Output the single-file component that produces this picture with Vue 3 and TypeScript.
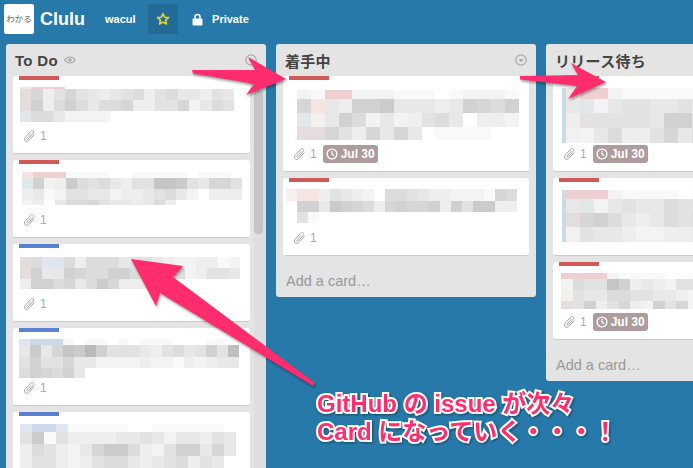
<script setup lang="ts">
// blurred card text: every row is "height:cells", a cell is a hex grey step or a tint letter
interface Blur { x: number; top: number; w: number; rows: string[]; side?: boolean }
interface Card { h: number; label: 'red' | 'blue'; blur: Blur; clip?: boolean; date?: boolean }
interface List { title: string; eye?: boolean; menu?: boolean; scroll?: boolean; add?: boolean; cards: Card[] }

const tints: Record<string, string> = {
  r: '#efd0d2', p: '#f6e4e3', l: '#cdd9ea', m: '#e0e6f0', n: '#e2e8ea', o: '#f3f0ee', k: '#e5dcdc',
}

function cellColor(c: string) {
  if (tints[c]) return tints[c]
  const d = parseInt(c, 16)
  const v = Math.round(168 + d * 5.8)
  return `rgb(${v},${v},${v})`
}

const lists: List[] = [
  {
    title: 'To Do', eye: true, menu: true, scroll: true,
    cards: [
      { h: 78, label: 'red', clip: true, blur: { x: 7, top: 7, w: 11.27, rows: ['2:prrrf', '11:k8ca8abcba9ca9bbcab', '11:k7c979b998ccaa8db9a', '11:n99bddddff'] } },
      { h: 78, label: 'red', clip: true, blur: { x: 9, top: 8, w: 11, rows: ['6:prrreeeeffeeeeefeeef', '11:n7dc69a9bcaa556ab88a', '11:cbedaabbdccba9bdfccc', '5:dcfb998abbcb9cffff'] } },
      { h: 78, label: 'blue', clip: true, blur: { x: 7, top: 9, w: 11, rows: ['11:k9mm9c999baabcddcced', '11:k7bb7899779aad9dcaab', '10:c7798b968cccc'] } },
      { h: 78, label: 'blue', clip: true, blur: { x: 6, top: 7, w: 11, rows: ['6:mlllefeefefeeefffeef', '12:b6b85637aaabca9ba7a4', '11:a7aa8bbddddcddecdcbb', '10:97897b'] } },
      { h: 78, label: 'blue', blur: { x: 7, top: 8, w: 12, rows: ['8:mllmeeeeeffeeeeeef', '12:a6eaccccbbabdbbcab', '12:c9acdb8669cda77b8b', '12:caacdca99bcba9cabf'] } },
    ],
  },
  {
    title: '着手中', menu: true, add: true,
    cards: [
      { h: 96, label: 'red', clip: true, date: true, blur: { x: 14, top: 10, w: 13.85, rows: ['9:derrdddeeefeddde', '14:8pbc776bbbcb7897', '14:nob79dbdca9bfccd', '13:kk8ac8b8bfeeeeff'] } },
      { h: 78, label: 'red', clip: true, blur: { x: 3, top: 7, w: 11, rows: ['12:oppcabcdf99abccddde89', '11:f77b6789c87887c7a66cc', '11:fae'] } },
    ],
  },
  {
    title: 'リリース待ち', add: true,
    cards: [
      { h: 96, label: 'red', clip: true, date: true, blur: { x: 13, top: 8, w: 14, side: true, rows: ['11:prrdeeeeeeee', '14:bndbaabbacba', '15:caaaaab77a99', '15:odb9cca8b9ab'] } },
      { h: 78, label: 'red', blur: { x: 13, top: 8, w: 14, side: true, rows: ['9:rrrdeeeefeee', '14:bndbabb9aa99', '14:k879bcb9a999', '15:oabbcddccbbb'] } },
      { h: 78, label: 'red', clip: true, date: true, blur: { x: 8, top: 7, w: 11.500, rows: ['6:rrrrdeeeeffe', '11:d9aa57cbcdaa', '11:oabb99aabbcd', '8:ka7ca8cd7a8d'] } },
    ],
  },
]
</script>

<template>
  <div class="page">
    <header class="bar">
      <div class="logo">わかる</div>
      <span class="name">Clulu</span>
      <span class="org">wacul</span>
      <div class="star">
        <svg width="14" height="14" viewBox="0 0 14 14">
          <path d="M7 1.6l1.6 3.6 3.9.4-2.9 2.6.8 3.8L7 10.1 3.6 12l.8-3.8L1.500 5.600l3.900-.4z" fill="none" stroke="#e8d22e" stroke-width="1.600" stroke-linejoin="round" />
        </svg>
      </div>
      <svg class="lock" width="11" height="13" viewBox="0 0 11 13">
        <path d="M3 6V4a2.500 2.500 0 0 1 5 0v2" fill="none" stroke="#fff" stroke-width="1.500" />
        <rect x="0.500" y="5.500" width="10" height="7" rx="1" fill="#fff" />
      </svg>
      <span class="private">Private</span>
    </header>

    <main class="board">
      <section v-for="list in lists" :key="list.title" class="list">
        <div class="list-head">
          <h2 class="title">{{ list.title }}</h2>
          <svg v-if="list.eye" class="eye" width="12" height="8" viewBox="0 0 12 8">
            <path d="M.8 4C2.200 1.900 4 1 6 1s3.800.9 5.200 3C9.800 6.100 8 7 6 7S2.200 6.100.8 4z" fill="none" stroke="#aaa" stroke-width="1.200" />
            <circle cx="6" cy="4" r="1.800" fill="#aaa" />
          </svg>
          <svg v-if="list.menu" class="menu" width="12" height="12" viewBox="0 0 12 12">
            <circle cx="6" cy="6" r="5.200" fill="none" stroke="#aaa" stroke-width="1.200" />
            <path d="M3.500 5h5L6 8.200z" fill="#aaa" />
          </svg>
        </div>
        <div class="list-body">
          <div class="cards">
            <article v-for="(card, i) in list.cards" :key="i" class="card" :style="{ height: card.h + 'px' }">
              <div class="label" :class="card.label" />
              <div class="blur" :class="{ side: card.blur.side }" :style="{ marginLeft: card.blur.x + 'px', marginTop: card.blur.top + 'px' }">
                <div v-for="(row, r) in card.blur.rows" :key="r" class="blur-row" :style="{ height: row.split(':')[0] + 'px' }">
                  <i v-for="(c, n) in row.split(':')[1]" :key="n" :style="{ width: card.blur.w + 'px', background: cellColor(c) }" />
                </div>
              </div>
              <div v-if="card.clip" class="foot">
                <svg width="13" height="14" viewBox="0 0 13 14">
                  <path d="M11.300 5.600L6.200 11.200c-1.300 1.400-3 1.500-4 .6s-1-2.600.3-4l4.900-5.400c.9-1 2.100-1.100 2.800-.4s.7 1.800-.2 2.800L5.500 9.700c-.5.500-1.100.6-1.400.3s-.3-.9.200-1.400l4-4.400" fill="none" stroke="#aaa" stroke-width="1" />
                </svg>
                <span class="count">1</span>
                <span v-if="card.date" class="date">
                  <svg width="12" height="12" viewBox="0 0 12 12">
                    <circle cx="6" cy="6" r="4.900" fill="none" stroke="#fff" stroke-width="1.400" />
                    <path d="M6 3v3.300l2 1.100" fill="none" stroke="#fff" stroke-width="1.200" />
                  </svg>
                  Jul 30
                </span>
              </div>
            </article>
          </div>
          <div v-if="list.scroll" class="track"><div class="thumb" /></div>
        </div>
        <div v-if="list.add" class="add">Add a card…</div>
      </section>
    </main>

    <svg class="arrows" width="693" height="468" viewBox="0 0 693 468">
      <polygon points="192,70 255,70 248,57 286,79 246,95 254,84 193,73.500" />
      <polygon points="520,76 578,75 571,63 606,82 568,99 577,86 520,79.500" />
      <polygon points="131,259 183,266 173,277 315,383 313,386 160,293 156,306" />
    </svg>
    <p class="note">GitHub の issue が次々<br>Card になっていく・・・！</p>
  </div>
</template>

<style>
html, body {
  margin: 0;
  background: #2779a9;
}
</style>

<style scoped>
.page {
  position: relative;
  width: 693px;
  height: 468px;
  overflow: hidden;
  background: #2779a9;
  font-family: "Liberation Sans", "Noto Sans CJK JP", sans-serif;
}

.bar {
  display: flex;
  align-items: center;
  height: 30px;
  padding: 4px 4px 6px;
  color: #fff;
}

.logo {
  width: 30px;
  height: 30px;
  line-height: 30px;
  text-align: center;
  border-radius: 2px;
  background: #fff;
  color: #666;
  font-size: 8.500px;
}

.name {
  margin-left: 6px;
  font-size: 18px;
  font-weight: bold;
}

.org {
  margin-left: 20px;
  font-size: 11px;
  font-weight: bold;
}

.star {
  display: flex;
  align-items: center;
  justify-content: center;
  width: 30px;
  height: 30px;
  margin-left: 12.500px;
  border-radius: 2px;
  background: #236b96;
}

.lock {
  margin-left: 14px;
}

.private {
  margin-left: 9px;
  font-size: 11px;
  font-weight: bold;
}

.board {
  display: flex;
  align-items: flex-start;
  gap: 10px;
  padding: 4px 6px 0;
}

.list {
  flex: none;
  width: 260px;
  border-radius: 3px;
  background: #e4e4e4;
}

.list-head {
  display: flex;
  align-items: center;
  height: 32px;
  padding: 0 9px;
}

.title {
  margin: 0;
  color: #444;
  font-size: 15px;
  font-weight: bold;
  letter-spacing: .3px;
}

.eye {
  margin-left: 6px;
}

.menu {
  margin-left: auto;
}

.list-body {
  display: flex;
  align-items: flex-start;
  padding-left: 7px;
}

.cards {
  display: flex;
  flex-direction: column;
  gap: 6px;
  width: 246px;
}

.list:first-child .cards {
  width: 237px;
}

.card {
  display: flex;
  flex-direction: column;
  flex: none;
  overflow: hidden;
  box-sizing: border-box;
  border-radius: 3px;
  background: #fff;
  border-bottom: 1px solid #ccc;
}

.label {
  flex: none;
  width: 40px;
  height: 4px;
  margin-left: 6px;
}

.label.red { background: #cf5a58; }
.label.blue { background: #5a82d1; }

.blur {
  flex: none;
}

.blur.side {
  box-shadow: -4px 0 0 #c9dce6;
}

.blur-row {
  display: flex;
}

.blur-row i {
  display: block;
  flex: none;
}

.foot {
  display: flex;
  align-items: center;
  gap: 3px;
  height: 18px;
  margin: auto 0 8px 10px;
  color: #aaa;
  font-size: 12px;
}

.count {
  margin-left: 1px;
}

.date {
  display: flex;
  align-items: center;
  gap: 3px;
  height: 18px;
  margin-left: 3px;
  padding: 0 3px;
  border-radius: 3px;
  background: #ae9b9b;
  color: #fff;
  font-size: 12px;
  font-weight: bold;
}

.track {
  flex: none;
  width: 12px;
  height: 392px;
  margin-left: 4px;
  padding-top: 14px;
  box-sizing: border-box;
  background: #dedede;
}

.thumb {
  width: 9px;
  height: 144px;
  border-radius: 4px;
  background: #c4c4c4;
}

.add {
  height: 41px;
  padding-left: 10px;
  line-height: 50px;
  color: #999;
  font-size: 14.500px;
}

.arrows {
  position: absolute;
  top: 0;
  left: 0;
  fill: #ff2d6d;
  filter: drop-shadow(1px 2px 1px rgba(0, 0, 0, .35));
}

.note {
  position: absolute;
  top: 390px;
  left: 317px;
  margin: 0;
  color: #ff2d6d;
  font-size: 24px;
  font-weight: bold;
  line-height: 28px;
  white-space: nowrap;
  -webkit-text-stroke: 4px #fff;
  paint-order: stroke fill;
  filter: drop-shadow(1px 1px 1px rgba(0, 0, 0, .4));
}
</style>
